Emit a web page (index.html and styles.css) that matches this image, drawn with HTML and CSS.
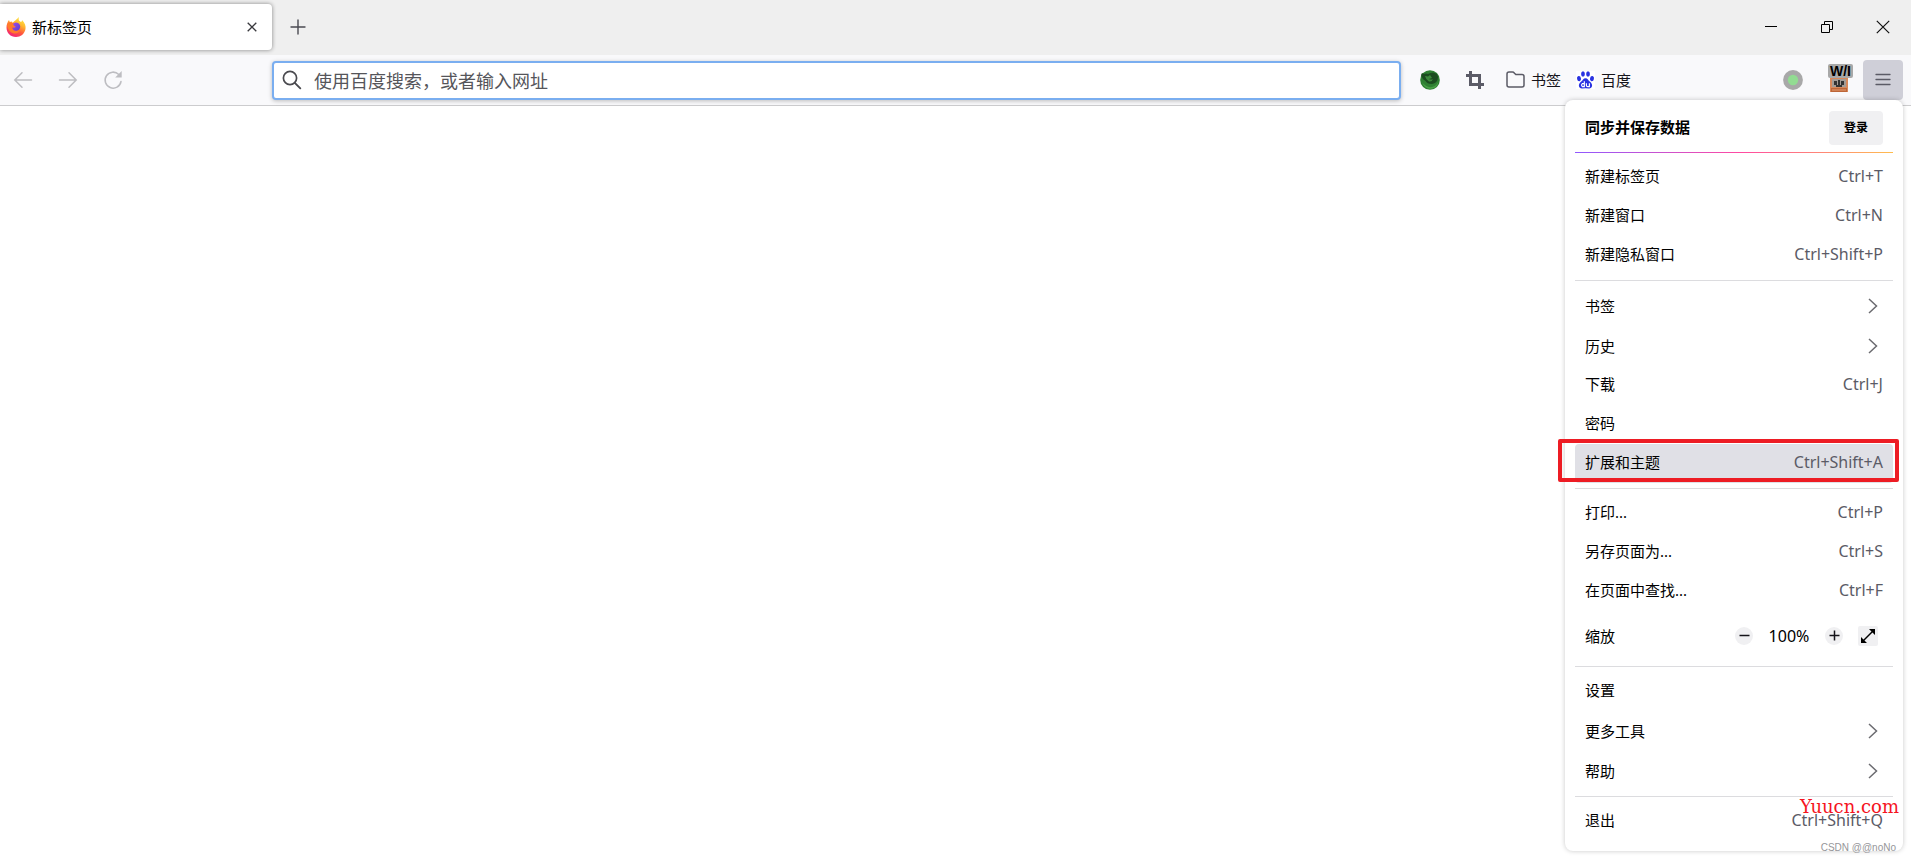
FILE: index.html
```html
<!DOCTYPE html>
<html lang="zh-CN">
<head>
<meta charset="utf-8">
<title>新标签页</title>
<link rel="stylesheet" href="styles.css">
</head>
<body>
<header class="tabstrip">
  <div class="tab">
    <svg class="tab-icon" viewBox="0 0 20 20" aria-hidden="true">
      <defs>
        <linearGradient id="fox" x1="0.8" y1="0" x2="0.3" y2="1"><stop offset="0" stop-color="#fff04a"/><stop offset="0.35" stop-color="#ffb62e"/><stop offset="0.65" stop-color="#ff5a3c"/><stop offset="1" stop-color="#f0207c"/></linearGradient>
        <linearGradient id="globe" x1="0" y1="0" x2="1" y2="1"><stop offset="0" stop-color="#a04be8"/><stop offset="1" stop-color="#5a3fd0"/></linearGradient>
      </defs>
      <path d="M13 0C12 3 13 4 15 5C16 4 16 4 16 3C19 6 20 9 19.500 12C18.600 17 14.500 20 10 20C4.500 20 .5 16 .5 10.500C.5 7.500 1.500 5 3 3L3.800 5L6 4.500L6.500 6C8.500 4 10.500 2.500 13 0Z" fill="url(#fox)"/>
      <path d="M1 8Q2 5 4 5.500L8 6Q10 7 8 8.500Q6 9.500 6 11Q7 14 10 14Q13 14 14 12Q13 17 8 16.500Q2 15 1 8Z" fill="#ff7b2b"/>
      <path d="M7 7Q9 4.500 12 6Q15 8 14 11Q13 14 10 13.800Q6.500 13.500 6.500 10.500Q8.500 11.500 9.800 9.800Q8 9.500 7 7Z" fill="url(#globe)"/>
    </svg>
    <span class="tab-title">新标签页</span>
    <button class="tab-close" aria-label="关闭标签页"><svg width="10" height="10" viewBox="0 0 10 10"><path d="M.7 .7L9.300 9.300M9.300 .7L.7 9.300" stroke="#38383d" stroke-width="1.300"/></svg></button>
  </div>
  <button class="tab-new" aria-label="打开新标签页"><svg width="16" height="16" viewBox="0 0 16 16"><path d="M8 1V15M1 8H15" stroke="#4a4a52" stroke-width="1.400" stroke-linecap="round"/></svg></button>
  <div class="window-controls">
    <button aria-label="最小化"><svg width="14" height="14" viewBox="0 0 14 14"><path d="M1 6.500H13" stroke="#000"/></svg></button>
    <button aria-label="还原"><svg width="14" height="14" viewBox="0 0 14 14"><path d="M1.500 4.500H9.500V12.500H1.500ZM4.500 4.500V1.500H12.500V9.500H9.500" fill="none" stroke="#000"/></svg></button>
    <button aria-label="关闭"><svg width="14" height="14" viewBox="0 0 14 14"><path d="M.8 .8L13.200 13.200M13.200 .8L.8 13.200" stroke="#111" stroke-width="1.200"/></svg></button>
  </div>
</header>

<nav class="toolbar" aria-label="导航">
  <button class="tool" aria-label="后退" disabled><svg width="20" height="20" viewBox="0 0 20 20"><path d="M18.500 10H2M9 2.800L1.800 10L9 17.200" class="nav-stroke"/></svg></button>
  <button class="tool" aria-label="前进" disabled><svg width="20" height="20" viewBox="0 0 20 20"><path d="M1.500 10H18M11 2.800L18.200 10L11 17.200" class="nav-stroke"/></svg></button>
  <button class="tool" aria-label="刷新" disabled><svg width="20" height="20" viewBox="0 0 20 20"><path d="M18 11.500A8 8 0 1 1 15.800 4.500" class="nav-stroke"/><path d="M18.700 1V7.500H12.200Z" fill="#bdbdc1"/></svg></button>
  <div class="spacer-left"></div>
  <label class="urlbar">
    <svg width="20" height="20" viewBox="0 0 20 20" aria-hidden="true"><circle cx="8" cy="8" r="6.600" fill="none" stroke="#4a4a4f" stroke-width="1.700"/><path d="M12.800 12.800L18.300 18.300" stroke="#4a4a4f" stroke-width="1.900" stroke-linecap="round"/></svg>
    <input type="text" aria-label="地址栏" placeholder="使用百度搜索，或者输入网址">
  </label>
  <button class="tool" aria-label="扩展"><svg width="20" height="20" viewBox="0 0 20 20"><circle cx="10" cy="10" r="9.800" fill="#2f8032"/><path d="M1 5L2 3L4 4Q6 3 8 4Q13 1 17 4Q19 7 17.500 10Q16 13.500 12 14Q7 14 5.500 11Q2 9 1 5Z" fill="#1c4c20"/><path d="M5 6L8 6.500L10 5L12 8L9 9Q11 10 13 9Q12 12 9 11.500Q6 10 5 6Z" fill="#3d8a3c"/><path d="M2 12Q6 18 12 17Q17 16 18.500 11Q18 18 10 19Q4 18 2 12Z" fill="#4aa047"/></svg></button>
  <button class="tool" aria-label="截图"><svg width="18" height="18" viewBox="0 0 18 18"><path d="M0 4.500H13.500V18M4.500 0V13.500H18" fill="none" stroke="#5b5b66" stroke-width="3"/></svg></button>
  <a class="bookmark" href="#"><svg width="19" height="18" viewBox="0 0 19 18" aria-hidden="true"><path d="M1 14V3Q1 1 3 1H6.500Q7.500 1 8.500 2.200L9.800 3.500H16Q18 3.500 18 5.500V14Q18 16 16 16H3Q1 16 1 14Z" fill="none" stroke="#5b5b66" stroke-width="1.500"/></svg>书签</a>
  <a class="bookmark" href="#"><svg width="19" height="18" viewBox="0 0 20 20" aria-hidden="true"><path d="M-1-1H21V21H-1Z" fill="#fff"/><g fill="#2932e1"><ellipse cx="2.800" cy="8.500" rx="2.200" ry="2.900" transform="rotate(-12 2.800 8.500)"/><ellipse cx="7.200" cy="3.400" rx="2.100" ry="3"/><ellipse cx="12.800" cy="3.400" rx="2.100" ry="3"/><ellipse cx="17.200" cy="8.500" rx="2.200" ry="2.900" transform="rotate(12 17.200 8.500)"/><path d="M10 8C12.500 8 13 10.500 15 12C19 15 17.500 20 13.500 19.500Q10 19 6.500 19.500C2.500 20 1 15 5 12C7 10.500 7.500 8 10 8Z"/></g><path d="M8.700 11.500V17.300H6.500Q4.800 15.700 6.500 14H8.700M11 13.500V16Q11 17.300 12.500 17.300H14.300V13.500" fill="none" stroke="#fff" stroke-width="1.300"/></svg>百度</a>
  <div class="spacer-right"></div>
  <button class="tool" aria-label="状态"><svg width="20" height="20" viewBox="0 0 20 20"><circle cx="10" cy="10" r="9.900" fill="#a8a8a8"/><circle cx="10" cy="10" r="5.200" fill="#92dc92"/></svg></button>
  <button class="tool addon" aria-label="脚本">
    <svg width="18" height="18" viewBox="0 0 18 18" aria-hidden="true"><path d="M0 0H18V17H0Z" fill="#d8895b"/><path d="M1 13H17V17H1Z" fill="#bd6638"/><path d="M2 4H16V12H2Z" fill="#a39c96"/><path d="M4 6H7V10H4ZM11 6H14V10H11ZM6 10H12V12H6ZM8 5H10V11H8Z" fill="#333"/><path d="M2 15H16" stroke="#e39b70"/></svg>
    <span class="addon-badge">W/I</span>
  </button>
  <button class="menu-button" aria-label="打开应用程序菜单" aria-expanded="true"><svg width="16" height="14" viewBox="0 0 16 14"><path d="M1 1.500H15M1 6.500H15M1 11.500H15" stroke="#5b5b66" stroke-width="1.300" stroke-linecap="round"/></svg></button>
</nav>

<main class="page"></main>

<aside class="menu" aria-label="应用程序菜单">
  <div class="account"><strong>同步并保存数据</strong><button class="login">登录</button></div>
  <div class="rainbow"></div>
  <button class="item"><span>新建标签页</span><kbd>Ctrl+T</kbd></button>
  <button class="item"><span>新建窗口</span><kbd>Ctrl+N</kbd></button>
  <button class="item"><span>新建隐私窗口</span><kbd>Ctrl+Shift+P</kbd></button>
  <hr>
  <button class="item sub"><span>书签</span><svg class="chevron" viewBox="0 0 10 16"><path d="M1 1L8.500 8L1 15"/></svg></button>
  <button class="item sub"><span>历史</span><svg class="chevron" viewBox="0 0 10 16"><path d="M1 1L8.500 8L1 15"/></svg></button>
  <button class="item"><span>下载</span><kbd>Ctrl+J</kbd></button>
  <button class="item"><span>密码</span></button>
  <button class="item active"><span>扩展和主题</span><kbd>Ctrl+Shift+A</kbd></button>
  <hr>
  <button class="item"><span>打印...</span><kbd>Ctrl+P</kbd></button>
  <button class="item"><span>另存页面为...</span><kbd>Ctrl+S</kbd></button>
  <button class="item"><span>在页面中查找...</span><kbd>Ctrl+F</kbd></button>
  <div class="zoom-row">
    <span class="zoom-label">缩放</span>
    <button class="round" aria-label="缩小"><svg width="11" height="11" viewBox="0 0 11 11"><path d="M.5 5.500H10.500" stroke="#15141a" stroke-width="1.500"/></svg></button>
    <span class="zoom-value">100%</span>
    <button class="round" aria-label="放大"><svg width="11" height="11" viewBox="0 0 11 11"><path d="M.5 5.500H10.500M5.500 .5V10.500" stroke="#15141a" stroke-width="1.500"/></svg></button>
    <button class="fullscreen" aria-label="全屏"><svg width="14" height="14" viewBox="0 0 14 14"><path d="M2 12L12 2" stroke="#000" stroke-width="1.500"/><path d="M8 0H14V6ZM0 8V14H6Z"/></svg></button>
  </div>
  <hr>
  <button class="item"><span>设置</span></button>
  <button class="item sub"><span>更多工具</span><svg class="chevron" viewBox="0 0 10 16"><path d="M1 1L8.500 8L1 15"/></svg></button>
  <button class="item sub"><span>帮助</span><svg class="chevron" viewBox="0 0 10 16"><path d="M1 1L8.500 8L1 15"/></svg></button>
  <hr>
  <button class="item"><span>退出</span><kbd>Ctrl+Shift+Q</kbd></button>
  <span class="site-mark">Yuucn.com</span>
  <span class="author-mark">CSDN @@noNo</span>
</aside>
</body>
</html>
```
FILE: styles.css
```css
* { box-sizing: border-box; }

body {
  margin: 0;
  min-height: 100vh;
  display: flex;
  flex-direction: column;
  position: relative;
  background: #fff;
  color: #000;
  font: 15px/20px "Noto Sans", "Noto Sans CJK SC", sans-serif;
}

button {
  margin: 0;
  padding: 0;
  border: 0;
  background: none;
  color: inherit;
  font: inherit;
}

svg { display: block; flex: none; }

/* Tab strip */
.tabstrip {
  display: flex;
  align-items: center;
  height: 55px;
  padding-bottom: 1px;
  background: #efefef;
}

.tab {
  display: flex;
  align-items: center;
  width: 272px;
  height: 46px;
  padding: 0 10px 0 6px;
  border-radius: 0 4px 4px 0;
  background: #fff;
  box-shadow: 0 0 4px rgba(0, 0, 0, 0.45);
}

.tab-icon { width: 20px; height: 20px; }
.tab-title { flex: 1; margin-left: 6px; }

.tab-close,
.tab-new {
  display: grid;
  place-items: center;
  width: 20px;
  height: 20px;
}

.tab-new { width: 32px; margin-left: 10px; }

.window-controls { display: flex; margin-left: auto; }

.window-controls button {
  display: grid;
  place-items: center;
  width: 56px;
  height: 54px;
}

/* Navigation toolbar */
.toolbar {
  display: flex;
  align-items: center;
  height: 51px;
  padding-right: 8px;
  border-bottom: 1px solid #ccccce;
  background: #f9f9fb;
}

.tool {
  display: grid;
  place-items: center;
  flex: none;
  width: 45px;
  height: 40px;
}

.nav-stroke {
  fill: none;
  stroke: #bdbdc1;
  stroke-width: 1.5;
  stroke-linecap: round;
}

.spacer-left { flex: 137 1 0; }
.spacer-right { flex: 132 1 0; }

.urlbar {
  display: flex;
  align-items: center;
  flex: 1108 1 0;
  height: 39px;
  margin-right: 7px;
  padding: 0 8px;
  border: 2px solid #7aaef0;
  border-radius: 4px;
  background: #fff;
  box-shadow: 0 1px 4px rgba(0, 0, 0, 0.25);
}

.urlbar input {
  flex: 1;
  min-width: 0;
  margin-left: 12px;
  padding: 0;
  border: 0;
  outline: 0;
  background: none;
  font: 18px/24px "Noto Sans CJK SC", sans-serif;
}

.urlbar input::placeholder { color: #55555a; opacity: 1; }

.bookmark {
  display: flex;
  align-items: center;
  gap: 6px;
  flex: none;
  padding: 0 7px 0 8px;
  color: #15141a;
  text-decoration: none;
}

.addon { position: relative; width: 48px; }
.addon svg { margin-top: 8px; }

.addon-badge {
  position: absolute;
  top: 4px;
  left: 13px;
  width: 25px;
  height: 14px;
  padding-left: 2px;
  border-radius: 2px;
  background: #a8a8a8;
  color: #000;
  font: bold 14px/14px "Liberation Sans", sans-serif;
  text-align: left;
}

.menu-button {
  display: grid;
  place-items: center;
  flex: none;
  width: 40px;
  height: 40px;
  border-radius: 4px;
  background: #cfcfd8;
}

.page { flex: 1; }

/* Application menu */
.menu {
  position: absolute;
  top: 100px;
  right: 8px;
  width: 338px;
  padding: 0 10px 10px;
  border-radius: 8px;
  background: #fff;
  box-shadow: 0 0 5px rgba(0, 0, 0, 0.22);
}

.account {
  display: flex;
  align-items: center;
  justify-content: space-between;
  padding: 11px 10px 7px;
}

.account strong { padding-bottom: 2px; }

.login {
  width: 54px;
  height: 34px;
  border-radius: 4px;
  background: #f0f0f2;
  font-size: 12px;
  font-weight: bold;
}

.rainbow {
  height: 1px;
  margin-bottom: 5px;
  background: linear-gradient(90deg, #9059ff, #ff4aa2 52%, #ffbd4f);
}

.item {
  display: flex;
  align-items: center;
  justify-content: space-between;
  position: relative;
  width: 100%;
  height: 39px;
  padding: 0 10px 3px;
  border-radius: 4px;
  text-align: left;
}

.item.sub { height: 40px; padding-bottom: 1px; }
.item kbd { color: #5b5b66; font: inherit; font-size: 16px; }
.item.active { background: #e0e0e6; }

.item.active::after {
  content: "";
  position: absolute;
  inset: -5px -6px 1px -17px;
  border: 4px solid #ed1c24;
  border-radius: 2px;
}

.chevron {
  width: 10px;
  height: 16px;
  margin-right: 5px;
  fill: none;
  stroke: #6b6b70;
  stroke-width: 1.5;
}

.menu hr {
  height: 1px;
  margin: 5px 0;
  border: 0;
  background: #dcdcdf;
}

.zoom-row {
  display: flex;
  align-items: center;
  height: 50px;
  padding: 0 15px 1px 10px;
}

.zoom-label { flex: 1; }
.zoom-value { width: 72px; text-align: center; font-size: 16px; }

.round,
.fullscreen {
  display: grid;
  place-items: center;
  width: 18px;
  height: 18px;
  border-radius: 50%;
  background: #f0f0f2;
}

.fullscreen {
  width: 20px;
  height: 20px;
  margin-left: 15px;
  border-radius: 2px;
}

/* Marks lying over the menu */
.site-mark {
  position: absolute;
  right: 4px;
  bottom: 34px;
  color: #f5141e;
  font: 18px/20px "DejaVu Serif", serif;
}

.author-mark {
  position: absolute;
  right: 7px;
  bottom: -4px;
  color: #96969a;
  font: 10px/14px "Liberation Sans", sans-serif;
}
```
